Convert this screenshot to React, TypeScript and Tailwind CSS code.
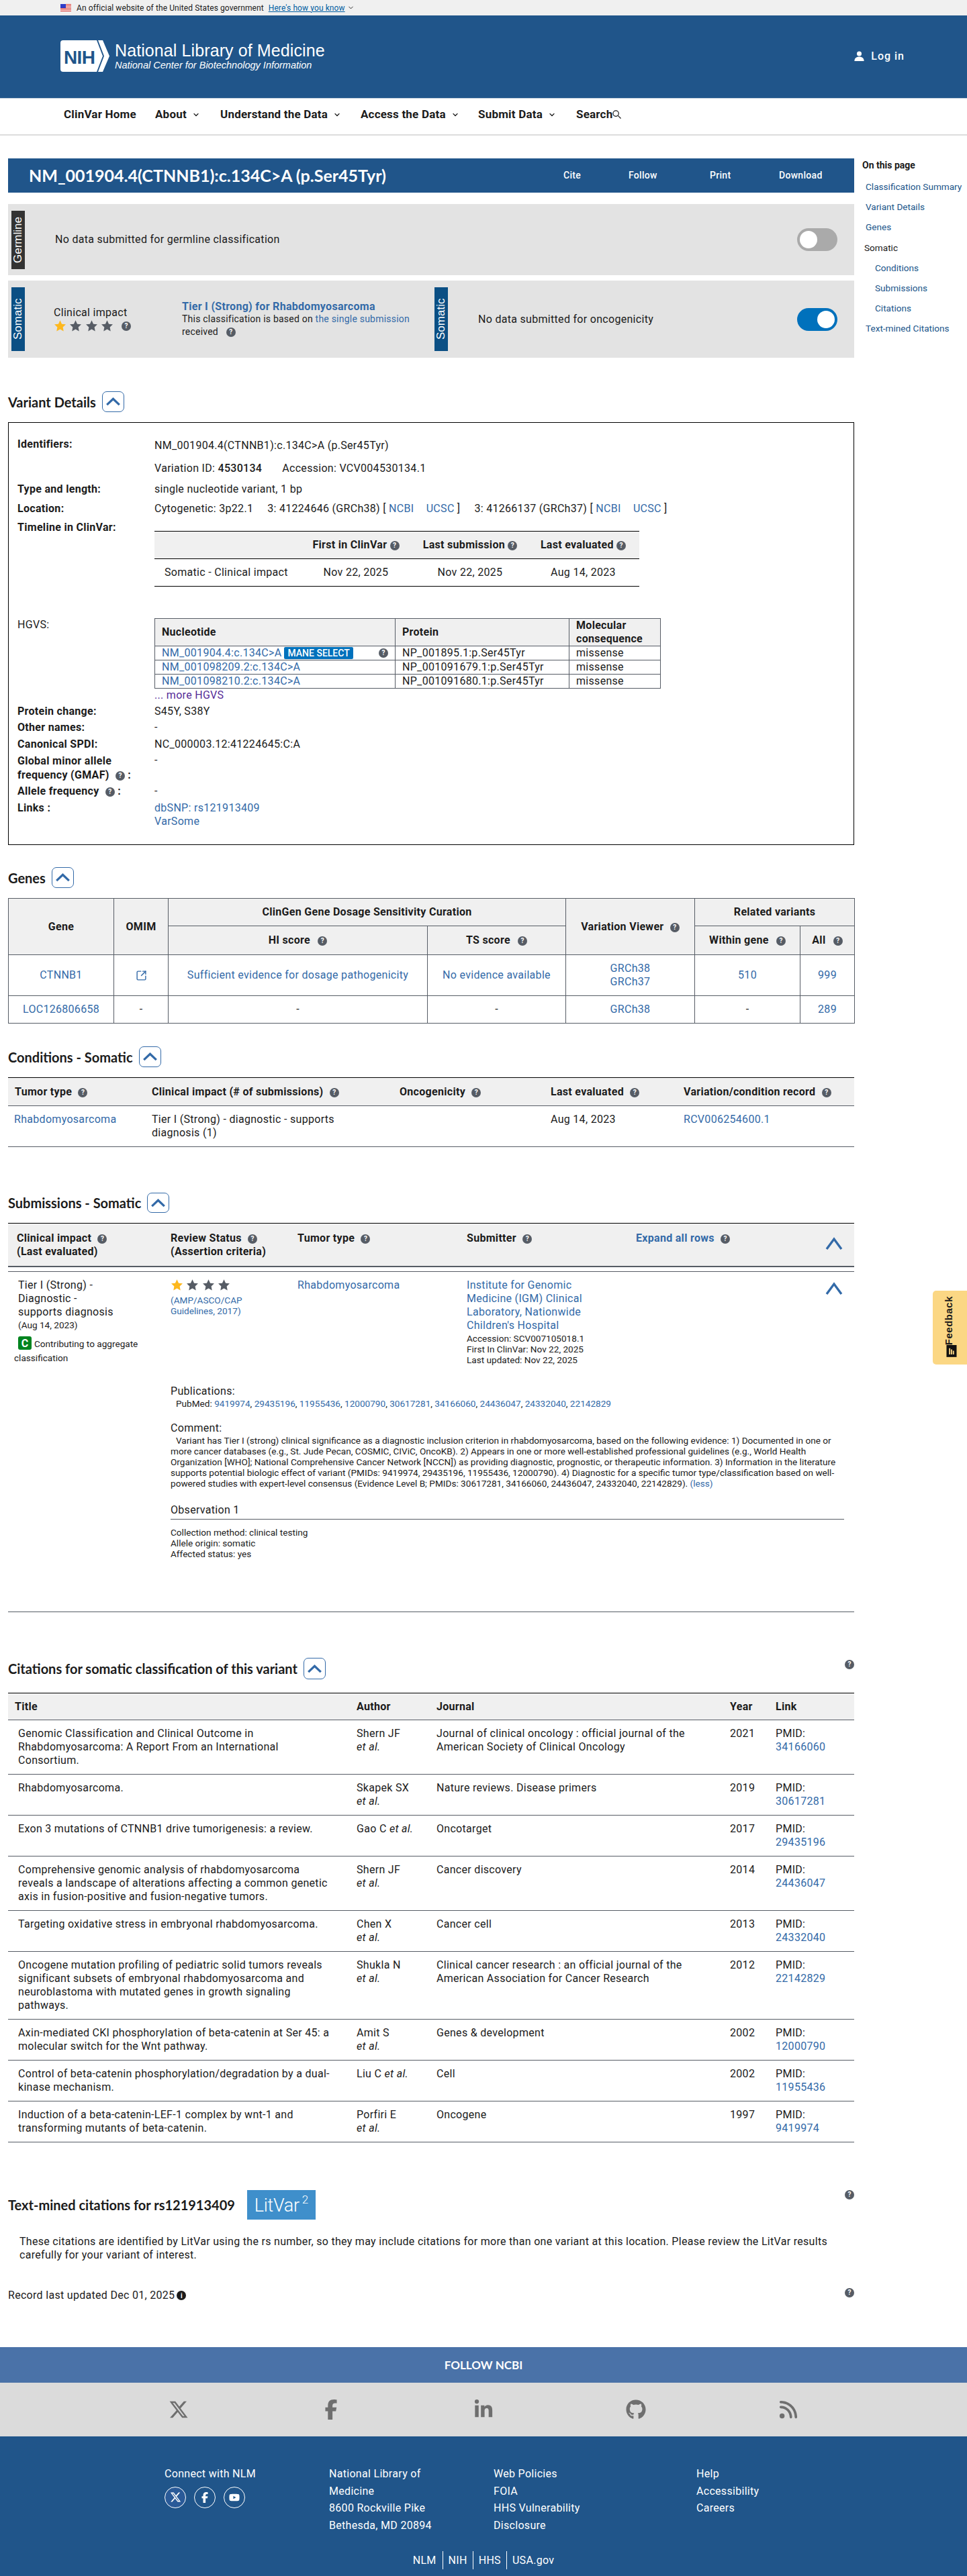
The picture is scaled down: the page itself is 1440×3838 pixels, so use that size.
import React from 'react';
import { ChevronDown, SquareArrowOutUpRight } from 'lucide-react';
import { FaXTwitter, FaFacebookF, FaLinkedinIn, FaGithub, FaRss, FaYoutube } from 'react-icons/fa6';

const link = 'text-[#336aa8]';

function Help({ className = '' }: { className?: string }) {
  return (
    <span className={`inline-flex w-[14px] h-[14px] rounded-full bg-[#565c65] text-white text-[10px] font-bold leading-none items-center justify-center tracking-normal align-[1px] ${className}`}>?</span>
  );
}

function Star({ gold = false }: { gold?: boolean }) {
  return (
    <svg viewBox="0 0 24 24" className="w-[19px] h-[19px] shrink-0">
      <path d="M12 1.5l3.2 6.9 7.5.9-5.5 5.2 1.4 7.5L12 18.3l-6.6 3.7 1.4-7.5L1.3 9.3l7.5-.9z" fill={gold ? '#fdb81e' : '#565c65'} />
    </svg>
  );
}

function Stars() {
  return (
    <span className="inline-flex gap-[4.3px]">
      <Star gold /><Star /><Star /><Star />
    </span>
  );
}

function Collapse({ className = 'h-[31px]' }: { className?: string }) {
  return (
    <span className={`inline-flex w-[33px] items-center justify-center border border-[#336aa8] rounded-[7px] ${className}`}>
      <svg viewBox="0 0 24 14" className="w-[23px] h-[13px]" fill="none" stroke="#336aa8" strokeWidth="3.6"><path d="M2 12L12 2.5 22 12" /></svg>
    </span>
  );
}

function RowChevron({ className }: { className: string }) {
  return (
    <svg viewBox="0 0 30 20" className={`absolute w-[30px] h-[20px] ${className}`} fill="none" stroke="#336aa8" strokeWidth="3.4"><path d="M4 18L15 3 26 18" /></svg>
  );
}

function Heading({ title, className = '', btn }: { title: string; className?: string; btn?: string }) {
  return (
    <div className={`flex items-center gap-[9px] ${className}`}>
      <h2 className="[font-family:Lato,sans-serif] font-bold text-[20px] leading-none tracking-normal text-[#1b1b1b]">{title}</h2>
      <Collapse className={btn} />
    </div>
  );
}

function SideTab({ label, color }: { label: string; color: string }) {
  return (
    <span className={`[writing-mode:vertical-rl] rotate-180 w-[20px] text-center text-white text-[17px] leading-[20px] [font-family:'Liberation_Sans',sans-serif] tracking-normal ${color}`}>{label}</span>
  );
}

function Toggle({ on }: { on: boolean }) {
  return (
    <span className={`flex w-[60px] h-[34px] rounded-full p-[4px] ${on ? 'bg-[#0071bc] justify-end' : 'bg-[#aaaaaa] justify-start'}`}>
      <span className="w-[26px] h-[26px] rounded-full bg-white" />
    </span>
  );
}

function Row({ label, children, className = '' }: { label: React.ReactNode; children?: React.ReactNode; className?: string }) {
  return (
    <div className={`grid grid-cols-[204px_1fr] ${className}`}>
      <div className="font-bold leading-[20px]">{label}</div>
      <div className="leading-[20px]">{children}</div>
    </div>
  );
}

const navItems = [
  { t: 'About', w: 'w-[97px]' },
  { t: 'Understand the Data', w: 'w-[209px]' },
  { t: 'Access the Data', w: 'w-[175px]' },
  { t: 'Submit Data', w: 'w-[146px]' },
];

const sideNav = [
  { t: 'Classification Summary', c: 'pl-[5px] text-[#20558a]' },
  { t: 'Variant Details', c: 'pl-[5px] text-[#20558a]' },
  { t: 'Genes', c: 'pl-[5px] text-[#20558a]' },
  { t: 'Somatic', c: 'pl-[3px] text-[#1b1b1b]' },
  { t: 'Conditions', c: 'pl-[19px] text-[#20558a]' },
  { t: 'Submissions', c: 'pl-[19px] text-[#20558a]' },
  { t: 'Citations', c: 'pl-[19px] text-[#20558a]' },
  { t: 'Text-mined Citations', c: 'pl-[5px] text-[#20558a]' },
];

const citations = [
  { title: 'Genomic Classification and Clinical Outcome in Rhabdomyosarcoma: A Report From an International Consortium.', author: 'Shern JF', journal: 'Journal of clinical oncology : official journal of the American Society of Clinical Oncology', year: '2021', pmid: '34166060' },
  { title: 'Rhabdomyosarcoma.', author: 'Skapek SX', journal: 'Nature reviews. Disease primers', year: '2019', pmid: '30617281' },
  { title: 'Exon 3 mutations of CTNNB1 drive tumorigenesis: a review.', author: 'Gao C', journal: 'Oncotarget', year: '2017', pmid: '29435196' },
  { title: 'Comprehensive genomic analysis of rhabdomyosarcoma reveals a landscape of alterations affecting a common genetic axis in fusion-positive and fusion-negative tumors.', author: 'Shern JF', journal: 'Cancer discovery', year: '2014', pmid: '24436047' },
  { title: 'Targeting oxidative stress in embryonal rhabdomyosarcoma.', author: 'Chen X', journal: 'Cancer cell', year: '2013', pmid: '24332040' },
  { title: 'Oncogene mutation profiling of pediatric solid tumors reveals significant subsets of embryonal rhabdomyosarcoma and neuroblastoma with mutated genes in growth signaling pathways.', author: 'Shukla N', journal: 'Clinical cancer research : an official journal of the American Association for Cancer Research', year: '2012', pmid: '22142829' },
  { title: 'Axin-mediated CKI phosphorylation of beta-catenin at Ser 45: a molecular switch for the Wnt pathway.', author: 'Amit S', journal: 'Genes & development', year: '2002', pmid: '12000790' },
  { title: 'Control of beta-catenin phosphorylation/degradation by a dual-kinase mechanism.', author: 'Liu C', journal: 'Cell', year: '2002', pmid: '11955436' },
  { title: 'Induction of a beta-catenin-LEF-1 complex by wnt-1 and transforming mutants of beta-catenin.', author: 'Porfiri E', journal: 'Oncogene', year: '1997', pmid: '9419974' },
];

const hgvs = [
  { n: 'NM_001904.4:c.134C>A', p: 'NP_001895.1:p.Ser45Tyr', mane: true },
  { n: 'NM_001098209.2:c.134C>A', p: 'NP_001091679.1:p.Ser45Tyr', mane: false },
  { n: 'NM_001098210.2:c.134C>A', p: 'NP_001091680.1:p.Ser45Tyr', mane: false },
];

const pubmed = ['9419974', '29435196', '11955436', '12000790', '30617281', '34166060', '24436047', '24332040', '22142829'];

const gth = 'border border-[#565c65] bg-[#f0f0f0] font-bold text-center';
const gtd = 'border border-[#565c65] text-center';
const small = 'text-[13.6px] tracking-normal leading-[16px]';

export default function App() {
  return (
    <div className="relative w-[1440px] h-[3838px] overflow-hidden bg-white text-[#1b1b1b] text-[16px] tracking-[0.3px] [font-family:Roboto,sans-serif]">
      {/* gov banner */}
      <div className="h-[23px] bg-[#f0f0f0] flex items-center pl-[90px] text-[12px] tracking-[0.1px]">
        <svg viewBox="0 0 16 11" className="w-[16px] h-[11px] mr-[8px]">
          <rect width="16" height="11" fill="#fff" />
          {[0, 2, 4, 6, 8, 10].map((y) => <rect key={y} y={y} width="16" height="1" fill="#d83933" />)}
          <rect width="8" height="6" fill="#2e3dc8" />
        </svg>
        <span>An official website of the United States government</span>
        <span className="ml-[7px] text-[#005ea2] underline">Here's how you know</span>
        <ChevronDown className="w-[11px] h-[11px] ml-[3px]" strokeWidth={2} />
      </div>

      {/* header */}
      <header className="h-[124px] bg-[#20558a] border-b border-[#c9d4df] flex items-center justify-between pl-[90px] pr-[93px] pb-[2px]">
        <div className="flex items-center gap-[8px] text-white">
          <svg viewBox="0 0 73 47" className="w-[73px] h-[47px]">
            <path d="M4 0H54L63 23.5 54 47H4a4 4 0 0 1-4-4V4a4 4 0 0 1 4-4z" fill="#fff" />
            <path d="M56 0H63L73 23.5 63 47H56L65 23.5z" fill="#fff" />
            <text x="5" y="35" fontSize="28" fontWeight="700" fill="#20558a" fontFamily="Liberation Sans, sans-serif" letterSpacing="-0.6">NIH</text>
          </svg>
          <div className="[font-family:'Liberation_Sans',sans-serif] tracking-normal">
            <div className="text-[25px] leading-[27px] tracking-[0.1px]">National Library of Medicine</div>
            <div className="text-[14.5px] leading-[17px] italic">National Center for Biotechnology Information</div>
          </div>
        </div>
        <div className="flex items-center text-white text-[16px] font-medium tracking-[1px]">
          <svg viewBox="0 0 16 18" className="w-[15px] h-[16px] mr-[10px]" fill="#fff">
            <circle cx="8" cy="4.5" r="4" />
            <path d="M0 17c0-5 3-7.5 8-7.5s8 2.5 8 7.5z" />
          </svg>
          Log in
        </div>
      </header>

      {/* nav */}
      <nav className="h-[55px] border-b-2 border-[#dcdcdc] flex items-center pl-[95px] font-bold text-[17px] tracking-[0.2px] pb-[6px]">
        <span className="w-[136px]">ClinVar Home</span>
        {navItems.map((n) => (
          <span key={n.t} className={`flex items-center ${n.w}`}>
            {n.t}
            <ChevronDown className="w-[12px] h-[12px] ml-[8px]" strokeWidth={2.4} />
          </span>
        ))}
        <span className="flex items-center">
          Search
          <svg viewBox="0 0 14 14" className="w-[13px] h-[13px]" fill="none" stroke="#1b1b1b" strokeWidth="1.3"><circle cx="5.5" cy="5.5" r="4.5" /><path d="M9 9l4.5 4.5" /></svg>
        </span>
      </nav>

      <div className="flex pl-[12px] pt-[34px]">
        <main className="w-[1260px]">
          {/* title */}
          <div className="h-[51px] bg-[#20558a] flex items-center text-white pl-[31px]">
            <h1 className="[font-family:Lato,sans-serif] font-bold text-[25px] tracking-normal w-[796px] whitespace-nowrap">NM_001904.4(CTNNB1):c.134C&gt;A (p.Ser45Tyr)</h1>
            <div className="flex text-[14px] font-medium">
              <span className="w-[97px]">Cite</span>
              <span className="w-[121px]">Follow</span>
              <span className="w-[103px]">Print</span>
              <span>Download</span>
            </div>
          </div>

          {/* germline */}
          <section className="mt-[17px] h-[106px] bg-[#e3e3e3] flex items-center pl-[5px] pr-[25px]">
            <div className="h-[87px] flex"><SideTab label="Germline" color="bg-[#333333]" /></div>
            <div className="ml-[45px] flex-1">No data submitted for germline classification</div>
            <Toggle on={false} />
          </section>

          {/* somatic */}
          <section className="mt-[8px] h-[115px] bg-[#e3e3e3] flex items-center pl-[5px] pr-[25px]">
            <div className="h-[95px] flex"><SideTab label="Somatic" color="bg-[#0b4f84]" /></div>
            <div className="ml-[43px] w-[191px]">
              <div className="leading-[20px]">Clinical impact</div>
              <div className="flex items-center">
                <Stars /><Help className="ml-[12px]" />
              </div>
            </div>
            <div className="w-[376px]">
              <div className={`font-bold leading-[18px] ${link}`}>Tier I (Strong) for Rhabdomyosarcoma</div>
              <div className="text-[14px] leading-[19px] tracking-[0.22px]">
                This classification is based on <span className={link}>the single submission</span> received <Help className="ml-[8px]" />
              </div>
            </div>
            <div className="h-[95px] flex"><SideTab label="Somatic" color="bg-[#0b4f84]" /></div>
            <div className="ml-[45px] flex-1">No data submitted for oncogenicity</div>
            <Toggle on />
          </section>

          {/* variant details */}
          <Heading title="Variant Details" className="mt-[50px] h-[31px]" />
          <section className="mt-[15px] h-[630px] border border-black pl-[13px] pt-[22px]">
            <Row label="Identifiers:" className="h-[36px]"><span className="block pt-[2px]">NM_001904.4(CTNNB1):c.134C&gt;A (p.Ser45Tyr)</span></Row>
            <Row label="" className="h-[30px]">
              Variation ID: <span className="font-medium">4530134</span>
              <span className="ml-[30px]">Accession: VCV004530134.1</span>
            </Row>
            <Row label="Type and length:" className="h-[30px] pt-[1px]">single nucleotide variant, 1 bp</Row>
            <Row label="Location:" className="h-[28px]">
              Cytogenetic: 3p22.1
              <span className="ml-[21px]">3: 41224646 (GRCh38) [ <span className={link}>NCBI</span> <span className={`${link} ml-[14px]`}>UCSC</span> ]</span>
              <span className="ml-[21px]">3: 41266137 (GRCh37) [ <span className={link}>NCBI</span> <span className={`${link} ml-[14px]`}>UCSC</span> ]</span>
            </Row>
            <Row label="Timeline in ClinVar:" className="h-[145px]">
              <table className="mt-[15px] w-[722px] border-collapse table-fixed">
                <colgroup><col className="w-[215px]" /><col className="w-[170px]" /><col className="w-[170px]" /><col className="w-[167px]" /></colgroup>
                <thead>
                  <tr className="h-[41px] bg-[#f0f0f0] border-y border-black font-bold">
                    <th />
                    <th className="text-center">First in ClinVar <Help /></th>
                    <th className="text-center">Last submission <Help /></th>
                    <th className="text-center">Last evaluated <Help /></th>
                  </tr>
                </thead>
                <tbody>
                  <tr className="h-[41px] border-b border-black">
                    <td className="pl-[15px]">Somatic - Clinical impact</td>
                    <td className="text-center">Nov 22, 2025</td>
                    <td className="text-center">Nov 22, 2025</td>
                    <td className="text-center">Aug 14, 2023</td>
                  </tr>
                </tbody>
              </table>
            </Row>
            <Row label={<span className="font-normal">HGVS:</span>} className="h-[129px]">
              <table className="w-[753px] border-collapse table-fixed border border-[#565c65]">
                <colgroup><col className="w-[358px]" /><col className="w-[259px]" /><col className="w-[136px]" /></colgroup>
                <thead>
                  <tr className="h-[41px] bg-[#f0f0f0] text-left leading-[20px]">
                    <th className="border border-[#565c65] pl-[10px] font-bold">Nucleotide</th>
                    <th className="border border-[#565c65] pl-[10px] font-bold">Protein</th>
                    <th className="border border-[#565c65] pl-[10px] font-bold">Molecular consequence</th>
                  </tr>
                </thead>
                <tbody>
                  {hgvs.map((h) => (
                    <tr key={h.n} className="h-[21px]">
                      <td className="border border-[#565c65] pl-[10px] pr-[10px]">
                        <div className="flex items-center leading-[20px]">
                          <span className={link}>{h.n}</span>
                          {h.mane && (
                            <>
                              <span className="ml-[4px] bg-[#0071bc] text-white text-[14px] tracking-normal rounded-[2px] px-[5px] h-[18px] leading-[18px] whitespace-nowrap font-medium">MANE SELECT</span>
                              <Help className="ml-auto" />
                            </>
                          )}
                        </div>
                      </td>
                      <td className="border border-[#565c65] pl-[10px]">{h.p}</td>
                      <td className="border border-[#565c65] pl-[10px]">missense</td>
                    </tr>
                  ))}
                </tbody>
              </table>
              <div className="text-[#562b97] leading-[20px]">... more HGVS</div>
            </Row>
            <Row label="Protein change:" className="h-[24px]">S45Y, S38Y</Row>
            <Row label="Other names:" className="h-[25px]">-</Row>
            <Row label="Canonical SPDI:" className="h-[24px]">NC_000003.12:41224645:C:A</Row>
            <Row label={<span className="block leading-[21px]">Global minor allele<br />frequency (GMAF) <Help className="ml-[5px]" /> :</span>} className="h-[46px]">-</Row>
            <Row label={<>Allele frequency <Help className="ml-[5px]" /> :</>} className="h-[25px]">-</Row>
            <Row label="Links :">
              <div className={link}>dbSNP: rs121913409</div>
              <div className={link}>VarSome</div>
            </Row>
          </section>

          {/* genes */}
          <Heading title="Genes" className="mt-[33px] h-[31px]" />
          <table className="mt-[15px] w-[1260px] h-[186px] border-collapse table-fixed border border-[#565c65]">
            <colgroup>
              <col className="w-[157px]" /><col className="w-[81px]" /><col className="w-[386px]" /><col className="w-[206px]" /><col className="w-[192px]" /><col className="w-[157px]" /><col className="w-[81px]" />
            </colgroup>
            <thead>
              <tr className="h-[41px]">
                <th rowSpan={2} className={gth}>Gene</th>
                <th rowSpan={2} className={gth}>OMIM</th>
                <th colSpan={2} className={gth}>ClinGen Gene Dosage Sensitivity Curation</th>
                <th rowSpan={2} className={gth}>Variation Viewer <Help className="ml-[5px]" /></th>
                <th colSpan={2} className={gth}>Related variants</th>
              </tr>
              <tr className="h-[43px]">
                <th className={gth}>HI score <Help className="ml-[7px]" /></th>
                <th className={gth}>TS score <Help className="ml-[7px]" /></th>
                <th className={gth}>Within gene <Help className="ml-[7px]" /></th>
                <th className={gth}>All <Help className="ml-[7px]" /></th>
              </tr>
            </thead>
            <tbody>
              <tr className="h-[61px]">
                <td className={`${gtd} ${link}`}>CTNNB1</td>
                <td className={gtd}><SquareArrowOutUpRight className="w-[17px] h-[17px] mx-auto text-[#336aa8]" strokeWidth={2} /></td>
                <td className={`${gtd} ${link}`}>Sufficient evidence for dosage pathogenicity</td>
                <td className={`${gtd} ${link}`}>No evidence available</td>
                <td className={`${gtd} ${link} leading-[20px]`}>GRCh38<br />GRCh37</td>
                <td className={`${gtd} ${link}`}>510</td>
                <td className={`${gtd} ${link}`}>999</td>
              </tr>
              <tr className="h-[41px]">
                <td className={`${gtd} ${link}`}>LOC126806658</td>
                <td className={gtd}>-</td>
                <td className={gtd}>-</td>
                <td className={gtd}>-</td>
                <td className={`${gtd} ${link}`}>GRCh38</td>
                <td className={gtd}>-</td>
                <td className={`${gtd} ${link}`}>289</td>
              </tr>
            </tbody>
          </table>

          {/* conditions */}
          <Heading title="Conditions - Somatic" className="mt-[34px] h-[31px]" />
          <div className="mt-[15px] border-t-[1.5px] border-black">
            <div className="h-[42px] bg-[#f0f0f0] border-b border-[#565c65] flex items-center font-bold">
              <span className="w-[214px] pl-[10px]">Tumor type <Help className="ml-[5px]" /></span>
              <span className="w-[369px]">Clinical impact (# of submissions) <Help className="ml-[5px]" /></span>
              <span className="w-[225px]">Oncogenicity <Help className="ml-[5px]" /></span>
              <span className="w-[198px]">Last evaluated <Help className="ml-[5px]" /></span>
              <span>Variation/condition record <Help className="ml-[5px]" /></span>
            </div>
            <div className="h-[61px] border-b border-[#565c65] flex pt-[10px] leading-[20px]">
              <span className={`w-[214px] pl-[9px] ${link}`}>Rhabdomyosarcoma</span>
              <span className="w-[369px] pr-[80px]">Tier I (Strong) - diagnostic - supports diagnosis (1)</span>
              <span className="w-[225px]" />
              <span className="w-[198px]">Aug 14, 2023</span>
              <span className={link}>RCV006254600.1</span>
            </div>
          </div>

          {/* submissions */}
          <Heading title="Submissions - Somatic" className="mt-[68px] h-[30px]" btn="h-[30px]" />
          <div className="mt-[15px] border-t border-black">
            <div className="h-[65px] bg-[#f0f0f0] border-b-2 border-[#565c65] flex font-bold leading-[20px] pt-[12px] relative">
              <span className="w-[242px] pl-[13px]">Clinical impact <Help className="ml-[5px]" /><br />(Last evaluated)</span>
              <span className="w-[189px]">Review Status <Help className="ml-[5px]" /><br />(Assertion criteria)</span>
              <span className="w-[252px]">Tumor type <Help className="ml-[5px]" /></span>
              <span className="w-[252px]">Submitter <Help className="ml-[5px]" /></span>
              <span className={link}>Expand all rows <Help className="ml-[5px]" /></span>
              <RowChevron className="right-[15px] top-[20px]" />
            </div>
            <div className="mt-[6px] h-[508px] border-t border-[#565c65] border-b relative pt-[10px]">
              <div className="flex h-[158px] leading-[20px]">
                <div className="w-[242px] pl-[15px]">
                  <div>Tier I (Strong) -<br />Diagnostic -<br />supports diagnosis</div>
                  <div className={`${small} mt-[1px]`}>(Aug 14, 2023)</div>
                  <div className="-ml-[6px] text-[13.6px] tracking-normal leading-[21px] mt-[9px] pr-[10px]">
                    <span className="ml-[6px] inline-flex w-[20px] h-[20px] rounded-[3px] bg-[#00841f] text-white font-bold text-[16px] items-center justify-center">C</span>
                    <span className="ml-[4px]">Contributing to aggregate classification</span>
                  </div>
                </div>
                <div className="w-[189px]">
                  <Stars />
                  <div className={`${small} pr-[30px] ${link}`}>(AMP/ASCO/CAP Guidelines, 2017)</div>
                </div>
                <div className={`w-[252px] ${link}`}>Rhabdomyosarcoma</div>
                <div className="w-[240px]">
                  <div className={`${link} pr-[30px]`}>Institute for Genomic Medicine (IGM) Clinical Laboratory, Nationwide Children's Hospital</div>
                  <div className={`${small} mt-[1px]`}>
                    Accession: SCV007105018.1<br />First In ClinVar: Nov 22, 2025<br />Last updated: Nov 22, 2025
                  </div>
                </div>
              </div>
              <RowChevron className="right-[15px] top-[15px]" />
              <div className="ml-[242px] mr-[15px]">
                <div className="leading-[20px]">Publications:</div>
                <div className={`${small} pl-[8px]`}>
                  PubMed: {pubmed.map((p, i) => (
                    <span key={p}><span className={link}>{p}</span>{i < pubmed.length - 1 ? ', ' : ''}</span>
                  ))}
                </div>
                <div className="leading-[20px] mt-[19px]">Comment:</div>
                <p className={`${small} indent-[8px]`}>
                  Variant has Tier I (strong) clinical significance as a diagnostic inclusion criterion in rhabdomyosarcoma, based on the following evidence: 1) Documented in one or more cancer databases (e.g., St. Jude Pecan, COSMIC, CIViC, OncoKB). 2) Appears in one or more well-established professional guidelines (e.g., World Health Organization [WHO]; National Comprehensive Cancer Network [NCCN]) as providing diagnostic, prognostic, or therapeutic information. 3) Information in the literature supports potential biologic effect of variant (PMIDs: 9419974, 29435196, 11955436, 12000790). 4) Diagnostic for a specific tumor type/classification based on well-powered studies with expert-level consensus (Evidence Level B; PMIDs: 30617281, 34166060, 24436047, 24332040, 22142829). <span className={link}>(less)</span>
                </p>
                <div className="mt-[22px] pb-[3px] leading-[20px] border-b border-[#565c65]">Observation 1</div>
                <div className={`mt-[11px] ${small}`}>
                  Collection method: clinical testing<br />Allele origin: somatic<br />Affected status: yes
                </div>
              </div>
            </div>
          </div>

          {/* citations */}
          <div className="mt-[68px] h-[32px] relative">
            <Heading title="Citations for somatic classification of this variant" btn="h-[32px]" />
            <Help className="absolute right-0 top-[3px]" />
          </div>
          <table className="mt-[20px] w-[1260px] border-collapse table-fixed">
            <colgroup>
              <col className="w-[519px]" /><col className="w-[119px]" /><col className="w-[437px]" /><col className="w-[68px]" /><col className="w-[117px]" />
            </colgroup>
            <thead>
              <tr className="h-[40px] bg-[#f0f0f0] border-t border-black border-b border-b-[#565c65] text-left font-bold">
                <th className="pl-[10px] font-bold">Title</th>
                <th className="font-bold">Author</th>
                <th className="font-bold">Journal</th>
                <th className="font-bold">Year</th>
                <th className="font-bold">Link</th>
              </tr>
            </thead>
            <tbody>
              {citations.map((c) => (
                <tr key={c.pmid} className="border-b border-[#565c65] align-top leading-[20px]">
                  <td className="pl-[15px] pr-[30px] py-[10px]">{c.title}</td>
                  <td className="py-[10px] pr-[34px]">{c.author} <i className="whitespace-nowrap">et al.</i></td>
                  <td className="py-[10px] pr-[40px]">{c.journal}</td>
                  <td className="py-[10px]">{c.year}</td>
                  <td className="py-[10px] pr-[30px]">PMID: <span className={link}>{c.pmid}</span></td>
                </tr>
              ))}
            </tbody>
          </table>

          {/* text mined */}
          <div className="mt-[71px] h-[44px] relative flex items-center">
            <h2 className="[font-family:Lato,sans-serif] font-bold text-[20px] tracking-normal">Text-mined citations for rs121913409</h2>
            <span className="ml-[18px] w-[102px] h-[44px] bg-[#3f8fcb] text-white text-[27px] font-light tracking-[-0.3px] flex items-center justify-center leading-none pt-[3px]">
              LitVar<sup className="text-[17px] -top-[10px] ml-[4px]">2</sup>
            </span>
            <Help className="absolute right-0 top-0" />
          </div>
          <p className="mt-[23px] pl-[17px] pr-[15px] leading-[20px]">
            These citations are identified by LitVar using the rs number, so they may include citations for more than one variant at this location. Please review the LitVar results carefully for your variant of interest.
          </p>
          <div className="mt-[40px] h-[20px] relative flex items-center">
            Record last updated Dec 01, 2025
            <span className="ml-[3px] inline-flex w-[14px] h-[14px] rounded-full bg-[#1b1b1b] text-white text-[10px] font-bold items-center justify-center">i</span>
            <Help className="absolute right-0 -top-[1px]" />
          </div>
        </main>

        {/* on this page */}
        <aside className="ml-[12px] w-[156px] text-[13.6px] tracking-normal">
          <div className="font-bold text-[14px] leading-[20px] pb-[12px]">On this page</div>
          {sideNav.map((s) => (
            <div key={s.t} className={`h-[30.2px] leading-[20px] whitespace-nowrap ${s.c}`}>{s.t}</div>
          ))}
        </aside>
      </div>

      {/* feedback tab */}
      <div className="absolute right-0 top-[1923px] w-[51px] h-[110px] rounded-l-[5px] bg-[#fbd784] flex flex-col items-center justify-between py-[8px]">
        <span className="[writing-mode:vertical-rl] rotate-180 text-[15px] font-bold tracking-[0.5px] [font-family:'Liberation_Sans',sans-serif] pl-[3px]">Feedback</span>
        <svg viewBox="0 0 18 20" className="w-[18px] h-[20px] mb-[2px] ml-[4px]">
          <path d="M1 0H17V19H1z" fill="#111" />
          <path d="M5 5h2v10H5zM8 7h2v8H8zM11 9h2v6h-2z" fill="#fbd784" />
        </svg>
      </div>

      {/* footer */}
      <footer className="absolute left-0 right-0 top-[3497px] text-white">
        <div className="h-[53px] bg-[#4a72a8] flex items-center justify-center [font-family:Lato,sans-serif] font-bold text-[17px] tracking-normal">FOLLOW NCBI</div>
        <div className="h-[80px] bg-[#dbdbdb] flex items-center justify-center gap-[197px] text-[#6f6f6f]">
          <FaXTwitter className="w-[30px] h-[30px]" />
          <FaFacebookF className="w-[30px] h-[30px]" />
          <FaLinkedinIn className="w-[30px] h-[30px]" />
          <FaGithub className="w-[30px] h-[30px]" />
          <FaRss className="w-[30px] h-[30px]" />
        </div>
        <div className="h-[208px] bg-[#20558a] pt-[43px]">
          <div className="flex pl-[245px] leading-[25.6px] h-[128px]">
            <div className="w-[245px]">
              Connect with NLM
              <div className="flex mt-[6px] gap-[12px]">
                <span className="w-[32px] h-[32px] rounded-full border border-white flex items-center justify-center bg-[#2a5a98]"><FaXTwitter className="w-[17px] h-[17px]" /></span>
                <span className="w-[32px] h-[32px] rounded-full border border-white flex items-center justify-center"><FaFacebookF className="w-[16px] h-[16px]" /></span>
                <span className="w-[32px] h-[32px] rounded-full border border-white flex items-center justify-center"><FaYoutube className="w-[16px] h-[16px]" /></span>
              </div>
            </div>
            <div className="w-[245px] pr-[60px]">National Library of Medicine<br />8600 Rockville Pike<br />Bethesda, MD 20894</div>
            <div className="w-[302px] pr-[120px]">Web Policies<br />FOIA<br />HHS Vulnerability Disclosure</div>
            <div>Help<br />Accessibility<br />Careers</div>
          </div>
          <div className="flex justify-center items-center h-[27px]">
            <span className="pr-[9px] border-r border-white leading-[27px]">NLM</span>
            <span className="px-[8px] border-r border-white leading-[27px]">NIH</span>
            <span className="px-[8px] border-r border-white leading-[27px]">HHS</span>
            <span className="pl-[8px] leading-[27px]">USA.gov</span>
          </div>
        </div>
      </footer>
    </div>
  );
}
